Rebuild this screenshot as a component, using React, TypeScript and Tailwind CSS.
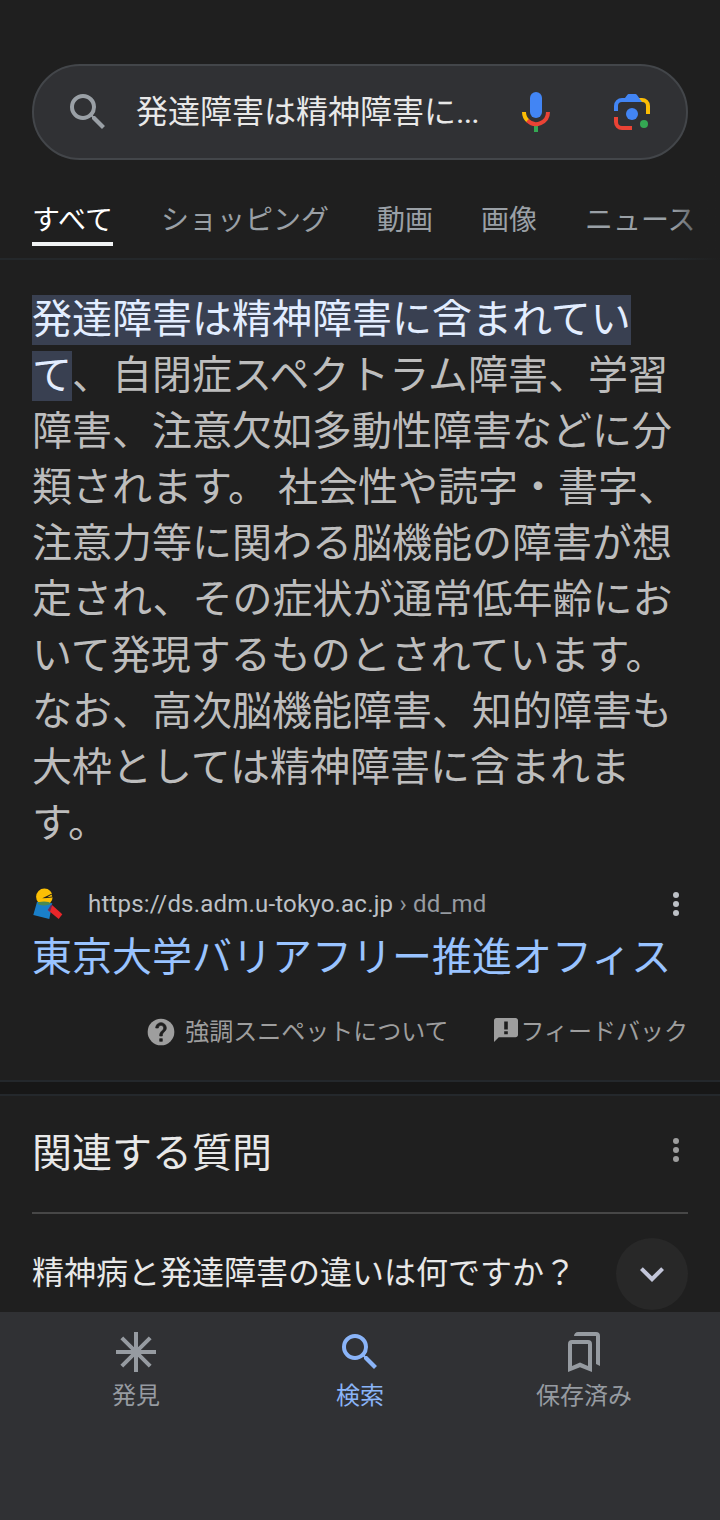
import React from 'react';

type NavItem = {
  label: string;
  icon: React.ReactNode;
  active?: boolean;
};

const tabs = ['ショッピング', '動画', '画像', 'ニュース'];

// 強調スニペットの本文(1行ずつ)
const snippetLines = [
  '障害、注意欠如多動性障害などに分',
  '類されます。 社会性や読字・書字、',
  '注意力等に関わる脳機能の障害が想',
  '定され、その症状が通常低年齢にお',
  'いて発現するものとされています。',
  'なお、高次脳機能障害、知的障害も',
  '大枠としては精神障害に含まれま',
  'す。',
];

const SearchIcon = () => (
  <svg viewBox="0 0 24 24" className="h-12 w-12 shrink-0" fill="currentColor">
    <path d="M15.5 14h-.79l-.28-.27A6.471 6.471 0 0 0 16 9.5 6.5 6.5 0 1 0 9.5 16c1.61 0 3.09-.59 4.23-1.57l.27.28v.79l5 4.99L20.49 19l-4.99-5zm-6 0C7.01 14 5 11.99 5 9.5S7.01 5 9.5 5 14 7.01 14 9.5 11.99 14 9.5 14z" />
  </svg>
);

const MicIcon = () => (
  <svg viewBox="0 0 24 24" className="h-12 w-12 shrink-0" fill="none">
    <rect x="9" y="2" width="6" height="13" rx="3" fill="#4285f4" />
    <path d="M11 18.5h2V22h-2z" fill="#34a853" />
    <path d="M6 12a6 6 0 0 0 1.9 4.4" stroke="#fbbc04" strokeWidth="2" />
    <path d="M7.76 16.24A6 6 0 0 0 18 12" stroke="#ea4335" strokeWidth="2" />
  </svg>
);

const LensIcon = () => (
  <svg viewBox="0 0 24 24" className="h-12 w-12 shrink-0" fill="none">
    <path d="M14.5 6H17a3 3 0 0 1 3 3v4" stroke="#fbbc04" strokeWidth="2" />
    <path
      d="M3 11.5V9a4 4 0 0 1 4-4h1.5l1.1-1.5c.3-.4.5-.5.9-.5h3c.4 0 .7.1 1 .5L17 7H7a2 2 0 0 0-2 2v2.5z"
      fill="#4285f4"
    />
    <path d="M4 14.5V17a3 3 0 0 0 3 3h5" stroke="#ea4335" strokeWidth="2" />
    <circle cx="12" cy="13" r="3" fill="#4285f4" />
    <circle cx="18" cy="18" r="2" fill="#34a853" />
  </svg>
);

const MoreIcon = () => (
  <svg viewBox="0 0 24 24" className="h-6 w-6 shrink-0" fill="currentColor">
    <circle cx="12" cy="3" r="3" />
    <circle cx="12" cy="12" r="3" />
    <circle cx="12" cy="21" r="3" />
  </svg>
);

const SiteIcon = () => (
  <svg viewBox="0 0 32 32" className="h-8 w-8 shrink-0">
    <circle cx="12.4" cy="8.8" r="8.3" fill="#fbbf04" />
    <path d="M10.3 10.2 21.5 4.8v4.4l-6.3.9z" fill="#1f1f1f" />
    <path d="M15.2 9.2 19.6 6.6l.6 1.8z" fill="#fbbf04" />
    <path d="M5 14 20.3 15.2 17.3 31 1.3 27z" fill="#1a7fc9" />
    <ellipse cx="12" cy="15.4" rx="6.4" ry="2" fill="#4b8a52" />
    <path d="M20.3 17.2 30.3 26.3 26.7 31 15.8 22z" fill="#e8262a" />
    <path d="M19.2 16.4 20.3 17.2 18 23.8 15.8 22z" fill="#6b2a5c" />
  </svg>
);

const HelpIcon = () => (
  <svg viewBox="0 0 24 24" className="h-8 w-8 shrink-0">
    <circle cx="12" cy="12" r="10" fill="currentColor" />
    <path
      d="M13 19h-2v-2h2v2zm2.07-7.75l-.9.92C13.45 12.9 13 13.5 13 15h-2v-.5c0-1.1.45-2.1 1.17-2.83l1.24-1.26c.37-.36.59-.86.59-1.41 0-1.1-.9-2-2-2s-2 .9-2 2H8c0-2.21 1.79-4 4-4s4 1.79 4 4c0 .88-.36 1.68-.93 2.25z"
      fill="#1f1f1f"
      stroke="#1f1f1f"
      strokeWidth="0.5"
    />
  </svg>
);

const FeedbackIcon = () => (
  <svg viewBox="2 2 20 20" className="h-6 w-6 shrink-0" fill="currentColor">
    <path d="M20 2H4c-1.1 0-1.99.9-1.99 2L2 22l4-4h14c1.1 0 2-.9 2-2V4c0-1.1-.9-2-2-2zm-6.5 9.5h-3V5h3v6.5zm0 4h-3V13h3v2.5z" />
  </svg>
);

const ExpandIcon = () => (
  <svg viewBox="0 0 24 24" className="h-12 w-12" fill="currentColor">
    <path d="M16.59 8.59L12 13.17 7.41 8.59 6 10l6 6 6-6z" />
  </svg>
);

const DiscoverIcon = () => (
  <svg viewBox="0 0 24 24" className="h-12 w-12" stroke="currentColor" strokeWidth="2">
    <path d="M12 2v20M2 12h20M4.9 4.9l14.2 14.2M19.1 4.9 4.9 19.1" />
  </svg>
);

const SavedIcon = () => (
  <svg viewBox="0 0 24 24" className="h-12 w-12" fill="currentColor">
    <path d="M7 4c0-1.1.9-2 2-2h9a2 2 0 0 1 2 2v15l-2-1V4z" />
    <path
      fillRule="evenodd"
      d="M4 22V8a2 2 0 0 1 2-2h8a2 2 0 0 1 2 2v14l-6-2.4zM6 19l4-1.7 4 1.7V8H6z"
    />
  </svg>
);

const navItems: NavItem[] = [
  { label: '発見', icon: <DiscoverIcon /> },
  { label: '検索', icon: <SearchIcon />, active: true },
  { label: '保存済み', icon: <SavedIcon /> },
];

const App = () => {
  return (
    <div className="flex h-[1520px] w-[720px] flex-col overflow-hidden whitespace-nowrap bg-[#1f1f1f] font-[Roboto,'Noto_Sans_CJK_JP',sans-serif]">
      {/* 検索バー */}
      <div className="px-8 pt-16">
        <div className="flex h-24 items-center rounded-full border-2 border-[#43464a] bg-[#303134] pl-[30px] pr-[30px] text-[#9aa0a6]">
          <SearchIcon />
          <span className="ml-6 flex-1 text-[32px] leading-[48px] text-[#e8e8e8]">
            発達障害は精神障害に<span className="tracking-[-0.8px]">...</span>
          </span>
          <MicIcon />
          <div className="ml-12 flex">
            <LensIcon />
          </div>
        </div>
      </div>

      {/* タブ */}
      <div className="relative mt-4 flex h-[84px] shrink-0 gap-12 border-b-2 border-[#24282b] px-8 text-[28px] leading-[42px] text-[#9aa0a6]">
        <div className="mt-6 h-[46px] border-b-4 border-[#f1f3f4] text-white">すべて</div>
        {tabs.map((tab) => (
          <div key={tab} className="mt-6">
            {tab}
          </div>
        ))}
        <div className="absolute -bottom-0.5 right-0 top-0 w-12 bg-linear-to-r from-transparent to-[#1f1f1f]" />
      </div>

      {/* 強調スニペット */}
      <div className="h-[820px] shrink-0 px-8 pt-8">
        <div className="text-[40px] leading-[56px] text-[#bdbdbd]">
          <div>
            <span className="bg-[#394051] pb-[2px] pt-px text-[#e2edff]">
              発達障害は精神障害に含まれてい
            </span>
          </div>
          <div>
            <span className="bg-[#394051] pb-[2px] pt-px text-[#e2edff] [font-kerning:none]">て</span>
            、自閉症スペクトラム障害、学習
          </div>
          {snippetLines.map((line) => (
            <div key={line}>{line}</div>
          ))}
        </div>

        <div className="mt-9 flex h-8 items-center text-2xl tracking-[0.2px] text-[#bdc1c6]">
          <SiteIcon />
          <span className="ml-6 flex-1">
            https://ds.adm.u-tokyo.ac.jp<span className="text-[#969ba1]"> › dd_md</span>
          </span>
          <MoreIcon />
        </div>
        <div className="mt-2.5 text-[40px] leading-[56px] text-[#99c3ff]">
          東京大学バリアフリー推進オフィス
        </div>
        <div className="mt-[30px] flex h-8 items-center justify-end text-2xl text-[#9e9e9e]">
          <HelpIcon />
          <span className="ml-2">強調スニペットについて</span>
          <div className="mb-1 ml-[46px] mr-[2px] flex">
            <FeedbackIcon />
          </div>
          <span>フィードバック</span>
        </div>
      </div>

      <div className="h-4 shrink-0 border-y-2 border-[#24282c] bg-[#171717]" />

      {/* 関連する質問 */}
      <div className="h-[216px] shrink-0 px-8 text-[#e8e8e8]">
        <div className="flex h-[118px] items-center justify-between border-b-2 border-[#474747]">
          <h2 className="text-[40px] leading-[56px]">関連する質問</h2>
          <div className="mb-2 text-[#9e9e9e]">
            <MoreIcon />
          </div>
        </div>
        <div className="mt-6 flex items-center justify-between">
          <span className="mb-[3px] text-[32px] leading-[48px]">精神病と発達障害の違いは何ですか？</span>
          <div className="flex h-[72px] w-[72px] items-center justify-center rounded-full bg-[#282828] text-[#c3c6d9]">
            <ExpandIcon />
          </div>
        </div>
      </div>

      {/* 下部ナビゲーション */}
      <div className="flex flex-1 justify-between bg-[#303134] px-6 pt-4">
        {navItems.map((item) => (
          <div
            key={item.label}
            className={
              'flex w-56 flex-col items-center text-2xl ' +
              (item.active ? 'text-[#8ab4f8]' : 'text-[#969ba1]')
            }
          >
            {item.icon}
            <span className="mt-1">{item.label}</span>
          </div>
        ))}
      </div>
    </div>
  );
};

export default App;
